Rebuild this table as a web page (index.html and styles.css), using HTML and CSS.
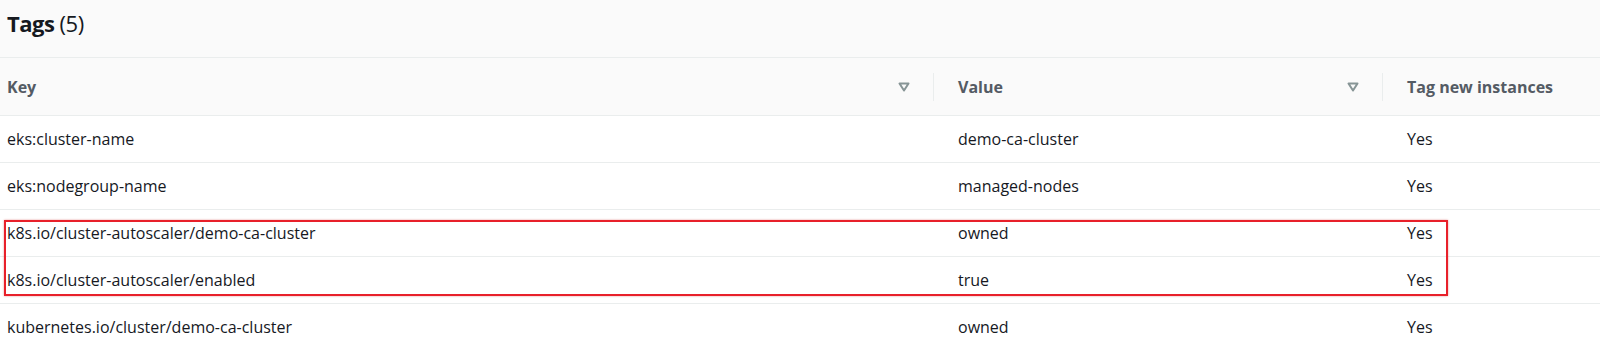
FILE: index.html
```html
<!DOCTYPE html>
<html>
<head>
<meta charset="utf-8">
<link rel="stylesheet" href="styles.css">
</head>
<body>
<div class="panel">
  <div class="title-bar"><h2 class="title">Tags <span class="count">(5)</span></h2></div>
  <div class="table">
    <div class="row head">
      <div class="cell key"><span>Key</span><span class="sort"><svg width="12" height="10" viewBox="0 0 12 10"><path d="M1.5 1.5 H10.5 L6 8.5 Z" fill="none" stroke="#879596" stroke-width="2" stroke-linejoin="round"/></svg></span></div>
      <div class="cell val"><span>Value</span><span class="sort"><svg width="12" height="10" viewBox="0 0 12 10"><path d="M1.5 1.5 H10.5 L6 8.5 Z" fill="none" stroke="#879596" stroke-width="2" stroke-linejoin="round"/></svg></span></div>
      <div class="cell tag"><span>Tag new instances</span></div>
    </div>
    <div class="row"><div class="cell key">eks:cluster-name</div><div class="cell val">demo-ca-cluster</div><div class="cell tag">Yes</div></div>
    <div class="row"><div class="cell key">eks:nodegroup-name</div><div class="cell val">managed-nodes</div><div class="cell tag">Yes</div></div>
    <div class="hl">
      <div class="row"><div class="cell key">k8s.io/cluster-autoscaler/demo-ca-cluster</div><div class="cell val">owned</div><div class="cell tag">Yes</div></div>
      <div class="row"><div class="cell key">k8s.io/cluster-autoscaler/enabled</div><div class="cell val">true</div><div class="cell tag">Yes</div></div>
      <div class="box"></div>
    </div>
    <div class="row"><div class="cell key">kubernetes.io/cluster/demo-ca-cluster</div><div class="cell val">owned</div><div class="cell tag">Yes</div></div>
  </div>
</div>
</body>
</html>
```
FILE: styles.css
```css
html, body { margin: 0; padding: 0; background: #fff; }
body { font-family: "Open Sans", "Noto Sans", sans-serif; color: #16191f; }
.panel { width: 1600px; }
.title-bar { background: #fafafa; height: 58px; border-bottom: 1px solid #eaeded; box-sizing: border-box; display: flex; align-items: center; padding-left: 7px; padding-bottom: 11px; }
.title { margin: 0; font-size: 22px; font-weight: 700; letter-spacing: -0.5px; line-height: 30px; }
.count { font-weight: 400; }
.row { display: grid; grid-template-columns: 933px 449px 1fr; height: 47px; border-bottom: 1px solid #eaeded; box-sizing: border-box; align-items: center; font-size: 16px; }
.row.head { background: #fafafa; height: 58px; font-weight: 700; color: #545b64; font-size: 16px; }
.cell { padding-left: 25px; display: flex; align-items: center; }
.cell.key { padding-left: 7px; }
.head .cell { height: 28px; }
.head .cell.val, .head .cell.tag { border-left: 1px solid #eaeded; padding-left: 24px; }
.sort { margin-left: auto; margin-right: 23px; display: flex; }
.hl { position: relative; }
.box { position: absolute; left: 4px; top: 10px; width: 1444px; height: 76px; border: 2px solid #e8202a; box-sizing: border-box; box-shadow: 0 0 2px rgba(200,0,0,0.4); pointer-events: none; }
```
